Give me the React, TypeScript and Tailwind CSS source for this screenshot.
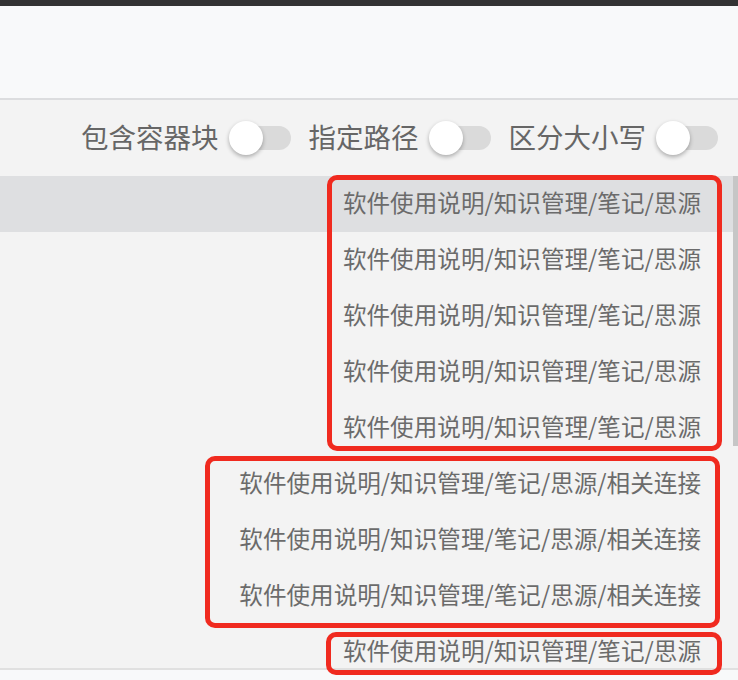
import React from "react";

const FONT = { fontFamily: '"Noto Sans CJK SC", "Noto Sans", sans-serif' };

function Switch() {
  return (
    <div className="relative w-[62px] h-[34px] shrink-0">
      <div className="absolute left-[8px] right-0 top-[5px] h-[24px] rounded-full bg-[#dadada]" />
      <div className="absolute left-0 top-0 w-[34px] h-[34px] rounded-full bg-white shadow-[0_2px_4px_rgba(0,0,0,0.3)]" />
    </div>
  );
}

function Toggle({ label }: { label: string }) {
  return (
    <div className="flex items-center gap-[10px]">
      <span className="text-[27.5px] leading-none text-[#666666] -mt-[3px]">{label}</span>
      <Switch />
    </div>
  );
}

const short = "软件使用说明/知识管理/笔记/思源";
const long = "软件使用说明/知识管理/笔记/思源/相关连接";
const rows = [short, short, short, short, short, long, long, long, short];

export default function App() {
  return (
    <div className="relative w-[738px] h-[680px] overflow-hidden bg-[#f3f3f3]" style={FONT}>
      <div className="h-[6px] bg-[#333333]" />
      <div className="h-[94px] bg-[#f8f9fa] border-b-2 border-[#dcdddf]" />
      <div className="h-[76px] flex items-center justify-end gap-[18px] pr-[20px]">
        <Toggle label="包含容器块" />
        <Toggle label="指定路径" />
        <Toggle label="区分大小写" />
      </div>
      <div className="relative h-[492px] overflow-hidden">
        {rows.map((t, i) => (
          <div
            key={i}
            className={
              "h-[56px] flex items-center justify-end pr-[37px] text-[23.6px] leading-none text-[#6b6b6b] " +
              (i === 0 ? "bg-[#dedfe1]" : "")
            }
          >
            <span className="-mt-[3px]">{t}</span>
          </div>
        ))}
        <div className="absolute right-0 top-0 w-[5px] h-[270px] bg-[#c6c6c6]" />
      </div>
      <div className="h-[12px] border-t-2 border-[#e0e0e0] bg-[#f8f9fa]" />

      <div className="absolute left-[327px] top-[175px] w-[395px] h-[276px] border-[5px] border-[#f02a1f] rounded-[10px]" />
      <div className="absolute left-[205px] top-[456px] w-[515px] h-[172px] border-[5px] border-[#f02a1f] rounded-[10px]" />
      <div className="absolute left-[326px] top-[632px] w-[396px] h-[43px] border-[5px] border-[#f02a1f] rounded-[10px]" />
    </div>
  );
}
